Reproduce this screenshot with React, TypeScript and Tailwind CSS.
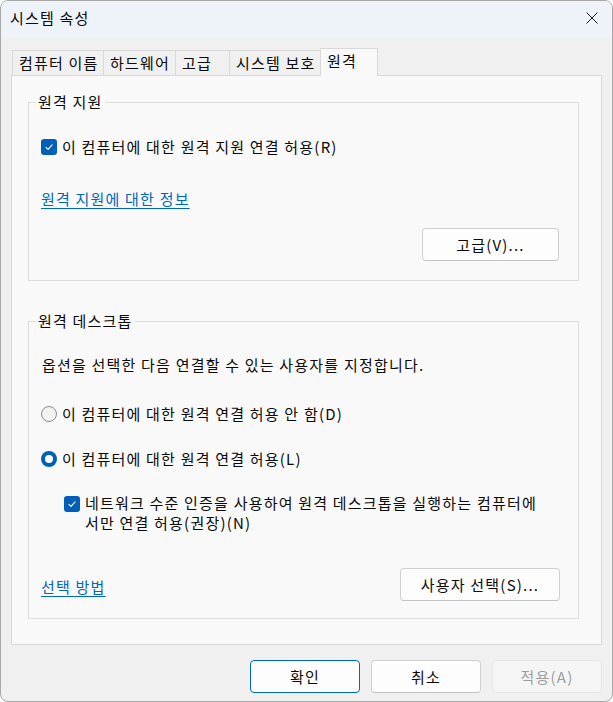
import React from 'react';

const font = "font-['Noto_Sans_CJK_KR','Noto_Sans',sans-serif]";

function CheckBox({ className = '' }: { className?: string }) {
  return (
    <span className={`flex h-[16px] w-[16px] shrink-0 items-center justify-center rounded-[3px] bg-[#005fb8] ${className}`}>
      <svg width="10" height="10" viewBox="0 0 10 10" fill="none">
        <path d="M2 5.3 L4.1 7.3 L8.1 2.9" stroke="white" strokeWidth="1.1" strokeLinecap="round" strokeLinejoin="round" />
      </svg>
    </span>
  );
}

function Radio({ checked }: { checked?: boolean }) {
  if (checked) {
    return (
      <span className="flex h-[16px] w-[16px] shrink-0 items-center justify-center rounded-full bg-[#005fb8]">
        <span className="h-[8px] w-[8px] rounded-full bg-white" />
      </span>
    );
  }
  return <span className="h-[16px] w-[16px] shrink-0 rounded-full border border-[#8a8a8a] bg-[#f3f3f3]" />;
}

function Button({ children, className = '' }: { children: React.ReactNode; className?: string }) {
  return (
    <button className={`flex h-[33px] items-center justify-center rounded-[4px] border ${className}`}>
      {children}
    </button>
  );
}

function Tab({ children, className = '' }: { children: React.ReactNode; className?: string }) {
  return (
    <div className={`h-[25px] shrink-0 border-t border-r border-[#d9d9d9] bg-[#f0f0f0] pl-[6px] pt-[2px] whitespace-nowrap ${className}`}>
      {children}
    </div>
  );
}

export default function App() {
  return (
    <div className="h-[702px] w-[613px] bg-white">
      <div className={`flex h-full flex-col overflow-hidden rounded-[8px] border border-[#a8a8a8] bg-[#f0f0f0] text-[15px] leading-[20px] tracking-[1.2px] text-[#0a0a0a] ${font}`}>
        {/* title bar */}
        <div className="flex h-[37px] shrink-0 items-start justify-between bg-[#eef3f9] pl-[9px] pr-[14px] pt-[7px]">
          <span>시스템 속성</span>
          <svg className="mt-[4px]" width="12" height="12" viewBox="0 0 12 12" fill="none">
            <path d="M0.5 0.5 L11.5 11.5 M11.5 0.5 L0.5 11.5" stroke="#1b1b1b" strokeWidth="1" />
          </svg>
        </div>

        <div className="flex flex-1 flex-col px-[10px]">
          {/* tabs */}
          <div className="mt-[10px] flex h-[27px] items-end pl-[1px]">
            <Tab className="w-[92px] border-l">컴퓨터 이름</Tab>
            <Tab className="w-[72px]">하드웨어</Tab>
            <Tab className="w-[54px]">고급</Tab>
            <Tab className="w-[91px]">시스템 보호</Tab>
            <div className="relative z-10 -mb-px -ml-px h-[28px] w-[58px] shrink-0 border border-b-0 border-[#d9d9d9] bg-[#f9f9f9] pl-[6px] pt-[2px]">
              원격
            </div>
          </div>

          {/* panel */}
          <div className="h-[570px] border border-[#d9d9d9] bg-[#f9f9f9] pl-[16px] pr-[22px] pt-[16px]">
            <fieldset className="border border-[#dcdcdc]">
              <legend className="ml-[7px] px-[2px]">원격 지원</legend>
              <div className="pb-[19px] pl-[12px] pr-[19px]">
                <div className="mt-[25px] flex items-center gap-[5px]">
                  <CheckBox />
                  <span>이 컴퓨터에 대한 원격 지원 연결 허용(R)</span>
                </div>
                <div className="mt-[32px]">
                  <a className="text-[#0067c0] underline underline-offset-[3px]">원격 지원에 대한 정보</a>
                </div>
                <div className="mt-[19px] flex justify-end">
                  <Button className="w-[137px] border-[#d0d0d0] border-b-[#c2c2c2] bg-[#fdfdfd]">고급(V)...</Button>
                </div>
              </div>
            </fieldset>

            <fieldset className="mt-[30px] border border-[#dcdcdc]">
              <legend className="ml-[7px] px-[2px]">원격 데스크톱</legend>
              <div className="pb-[17px] pl-[12px] pr-[18px]">
                <p className="mt-[24px] pl-[1px]">옵션을 선택한 다음 연결할 수 있는 사용자를 지정합니다.</p>
                <div className="mt-[29px] flex items-center gap-[5px]">
                  <Radio />
                  <span>이 컴퓨터에 대한 원격 연결 허용 안 함(D)</span>
                </div>
                <div className="mt-[25px] flex items-center gap-[5px]">
                  <Radio checked />
                  <span>이 컴퓨터에 대한 원격 연결 허용(L)</span>
                </div>
                <div className="ml-[23px] mt-[24px] flex items-start gap-[5px]">
                  <CheckBox className="mt-[3px]" />
                  <span className="whitespace-nowrap">
                    네트워크 수준 인증을 사용하여 원격 데스크톱을 실행하는 컴퓨터에
                    <br />
                    서만 연결 허용(권장)(N)
                  </span>
                </div>
                <div className="mt-[35px] flex items-start justify-between">
                  <a className="mt-[9px] text-[#0067c0] underline underline-offset-[3px]">선택 방법</a>
                  <Button className="w-[160px] border-[#d0d0d0] border-b-[#c2c2c2] bg-[#fdfdfd]">사용자 선택(S)...</Button>
                </div>
              </div>
            </fieldset>
          </div>

          {/* dialog buttons */}
          <div className="mt-[15px] flex justify-end gap-[11px]">
            <Button className="w-[110px] border-[#0067c0] bg-[#fdfdfd]">확인</Button>
            <Button className="w-[110px] border-[#d0d0d0] border-b-[#c2c2c2] bg-[#fdfdfd]">취소</Button>
            <Button className="w-[110px] border-[#e5e5e5] bg-[#f5f5f5] text-[#9d9d9d]">적용(A)</Button>
          </div>
        </div>
      </div>
    </div>
  );
}
